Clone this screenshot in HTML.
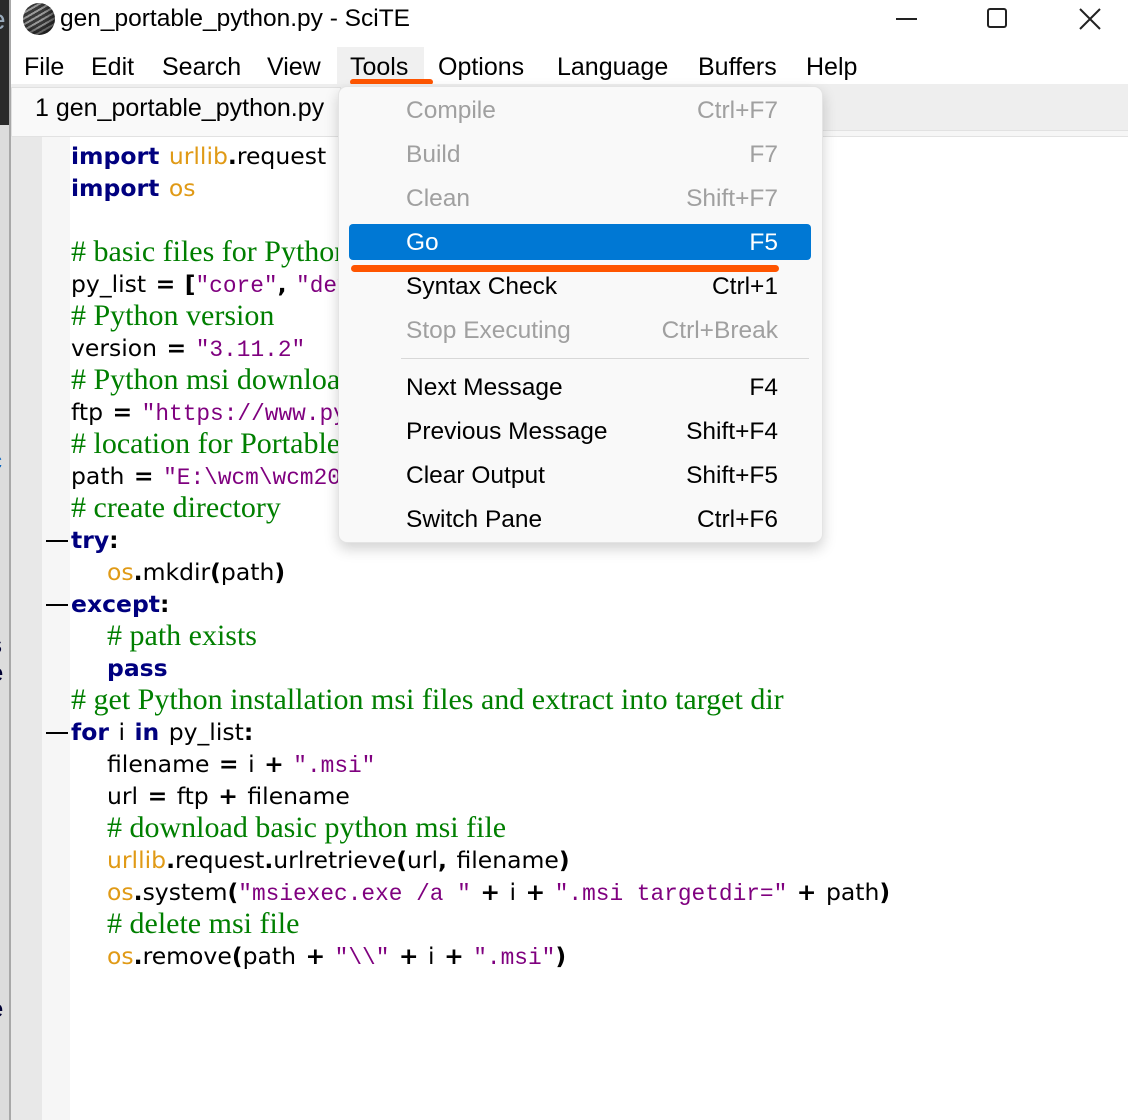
<!DOCTYPE html>
<html><head><meta charset="utf-8"><style>
*{margin:0;padding:0;box-sizing:border-box}
body{width:1128px;height:1120px;overflow:hidden;background:#fff;position:relative;font-family:"Liberation Sans","DejaVu Sans",sans-serif;color:#000}
.abs{position:absolute}
.t{position:absolute;white-space:pre;font-family:"DejaVu Sans",sans-serif;font-size:23.5px;word-spacing:2px;line-height:32px;left:71px;top:1px}
.k{color:#00007f;font-weight:bold}
.o{font-weight:bold}
.m{color:#e09a16}
.c{color:#007f00;font-family:"Liberation Serif","DejaVu Serif",serif;font-size:30px;word-spacing:0}
.s{color:#7f007f;font-family:"Liberation Mono",monospace;font-size:22.8px;word-spacing:0}
.mi{position:absolute;left:0;right:0;height:44px;font-size:24.5px;line-height:44px}
.mi .l{position:absolute;left:67px}
.mi .r{position:absolute;right:44px}
.dis{color:#a0a0a0}
.fold{position:absolute;left:46px;width:22px;height:2px;background:#000}
</style></head><body>
<div class="abs" style="left:0;top:0;width:10px;height:125px;background:#2a2a2a"></div>
<div class="abs" style="left:0;top:125px;width:10px;height:995px;background:#dcdcdc"></div>
<div class="abs" style="top:2px;font-size:28px;color:#9ab;line-height:36px;left:-10px">e</div>
<div class="abs" style="left:-10px;top:448px;font-size:24px;color:#0060c0">c</div>
<div class="abs" style="left:-10px;top:632px;font-size:24px;color:#003">s</div>
<div class="abs" style="left:-10px;top:660px;font-size:24px;color:#003">e</div>
<div class="abs" style="left:-10px;top:996px;font-size:24px;color:#003">e</div>
<div class="abs" style="left:9px;top:0;width:2px;height:1120px;background:#a8a8a8"></div>
<div class="abs" style="left:11px;top:0;width:1117px;height:46px;background:#fff"></div>
<div class="abs" style="left:23px;top:3px;width:32px;height:32px;border-radius:50%;background:repeating-linear-gradient(150deg,#3a3a3a 0 3px,#9a9a9a 3px 5px);box-shadow:inset -4px -4px 8px rgba(0,0,0,.5)"></div>
<div class="abs" style="left:60px;top:3px;font-size:24.5px;line-height:32px">gen_portable_python.py - SciTE</div>
<div class="abs" style="left:896px;top:18px;width:21px;height:2px;background:#222"></div>
<div class="abs" style="left:987px;top:8px;width:20px;height:20px;border:2px solid #222;border-radius:3px"></div>
<svg class="abs" style="left:1078px;top:7px" width="24" height="24"><path d="M2 2L22 22M22 2L2 22" stroke="#222" stroke-width="2"/></svg>
<div class="abs" style="left:337px;top:47px;width:87px;height:42px;background:#f0f0f0"></div>
<div class="abs" style="top:51px;left:0;font-size:25px;line-height:32px;width:900px">
<span class="abs" style="left:24px">File</span><span class="abs" style="left:91px">Edit</span><span class="abs" style="left:162px">Search</span><span class="abs" style="left:267px">View</span><span class="abs" style="left:350px">Tools</span><span class="abs" style="left:438px">Options</span><span class="abs" style="left:557px">Language</span><span class="abs" style="left:698px">Buffers</span><span class="abs" style="left:806px">Help</span></div>
<div class="abs" style="left:350px;top:79px;width:83px;height:6px;background:#ff5500;border-radius:3px"></div>
<div class="abs" style="left:11px;top:84px;width:1117px;height:46px;background:#eeeeee"></div>
<div class="abs" style="left:11px;top:130px;width:1117px;height:7px;background:#f6f6f6;border-top:1px solid #e2e2e2;border-bottom:1px solid #e2e2e2"></div>
<div class="abs" style="left:11px;top:87px;width:330px;height:49px;background:#f9f9f9;border:1px solid #e0e0e0;border-bottom:none"></div>
<div class="abs" style="left:35px;top:92px;font-size:25px;line-height:32px">1 gen_portable_python.py</div>
<div class="abs" style="left:11px;top:137px;width:31px;height:983px;background:#e8e8e8"></div>
<div class="abs" style="left:42px;top:137px;width:28px;height:983px;background:#f6f6f6"></div>
<div class="t" style="top:140px"><span class="k">import</span> <span class="m">urllib</span><span class="o">.</span>request</div>
<div class="t" style="top:172px"><span class="k">import</span> <span class="m">os</span></div>
<div class="t" style="top:236px"><span class="c"># basic files for Python</span></div>
<div class="t" style="top:268px">py_list <span class="o">=</span> <span class="o">[</span><span class="s">"core"</span><span class="o">,</span> <span class="s">"dev"</span></div>
<div class="t" style="top:300px"><span class="c"># Python version</span></div>
<div class="t" style="top:332px">version <span class="o">=</span> <span class="s">"3.11.2"</span></div>
<div class="t" style="top:364px"><span class="c"># Python msi download</span></div>
<div class="t" style="top:396px">ftp <span class="o">=</span> <span class="s">"https://www.python.org/ftp/python/3.11.2/amd64/"</span></div>
<div class="t" style="top:428px"><span class="c"># location for Portable</span></div>
<div class="t" style="top:460px">path <span class="o">=</span> <span class="s">"E:\wcm\wcm2023"</span></div>
<div class="t" style="top:492px"><span class="c"># create directory</span></div>
<div class="t" style="top:524px"><span class="k">try</span><span class="o">:</span></div>
<div class="t" style="top:556px;left:107px"><span class="m">os</span><span class="o">.</span>mkdir<span class="o">(</span>path<span class="o">)</span></div>
<div class="t" style="top:588px"><span class="k">except</span><span class="o">:</span></div>
<div class="t" style="top:620px;left:107px"><span class="c"># path exists</span></div>
<div class="t" style="top:652px;left:107px"><span class="k">pass</span></div>
<div class="t" style="top:684px"><span class="c"># get Python installation msi files and extract into target dir</span></div>
<div class="t" style="top:716px"><span class="k">for</span> i <span class="k">in</span> py_list<span class="o">:</span></div>
<div class="t" style="top:748px;left:107px">filename <span class="o">=</span> i <span class="o">+</span> <span class="s">".msi"</span></div>
<div class="t" style="top:780px;left:107px">url <span class="o">=</span> ftp <span class="o">+</span> filename</div>
<div class="t" style="top:812px;left:107px"><span class="c"># download basic python msi file</span></div>
<div class="t" style="top:844px;left:107px"><span class="m">urllib</span><span class="o">.</span>request<span class="o">.</span>urlretrieve<span class="o">(</span>url<span class="o">,</span> filename<span class="o">)</span></div>
<div class="t" style="top:876px;left:107px"><span class="m">os</span><span class="o">.</span>system<span class="o">(</span><span class="s">"msiexec.exe /a "</span> <span class="o">+</span> i <span class="o">+</span> <span class="s">".msi targetdir="</span> <span class="o">+</span> path<span class="o">)</span></div>
<div class="t" style="top:908px;left:107px"><span class="c"># delete msi file</span></div>
<div class="t" style="top:940px;left:107px"><span class="m">os</span><span class="o">.</span>remove<span class="o">(</span>path <span class="o">+</span> <span class="s">"\\"</span> <span class="o">+</span> i <span class="o">+</span> <span class="s">".msi"</span><span class="o">)</span></div>
<div class="fold" style="top:540px"></div>
<div class="fold" style="top:604px"></div>
<div class="fold" style="top:732px"></div>
<div class="abs" style="left:338px;top:86px;width:485px;height:457px;background:#f9f9f9;border:1px solid #e4e4e4;border-radius:9px;box-shadow:0 6px 14px rgba(0,0,0,.18)">
<div class="abs" style="left:10px;top:137px;width:462px;height:36px;background:#0078d4;border-radius:4px"></div>
<div class="mi dis" style="top:2px"><span class="l">Compile</span><span class="r">Ctrl+F7</span></div>
<div class="mi dis" style="top:46px"><span class="l">Build</span><span class="r">F7</span></div>
<div class="mi dis" style="top:90px"><span class="l">Clean</span><span class="r">Shift+F7</span></div>
<div class="mi" style="top:134px;color:#fff"><span class="l">Go</span><span class="r">F5</span></div>
<div class="mi" style="top:178px"><span class="l">Syntax Check</span><span class="r">Ctrl+1</span></div>
<div class="mi dis" style="top:222px"><span class="l">Stop Executing</span><span class="r">Ctrl+Break</span></div>
<div class="abs" style="left:62px;top:271px;width:408px;height:1px;background:#d8d8d8"></div>
<div class="mi" style="top:279px"><span class="l">Next Message</span><span class="r">F4</span></div>
<div class="mi" style="top:323px"><span class="l">Previous Message</span><span class="r">Shift+F4</span></div>
<div class="mi" style="top:367px"><span class="l">Clear Output</span><span class="r">Shift+F5</span></div>
<div class="mi" style="top:411px"><span class="l">Switch Pane</span><span class="r">Ctrl+F6</span></div>
</div>
<div class="abs" style="left:351px;top:265px;width:428px;height:7px;background:#ff5500;border-radius:4px"></div>
</body></html>
